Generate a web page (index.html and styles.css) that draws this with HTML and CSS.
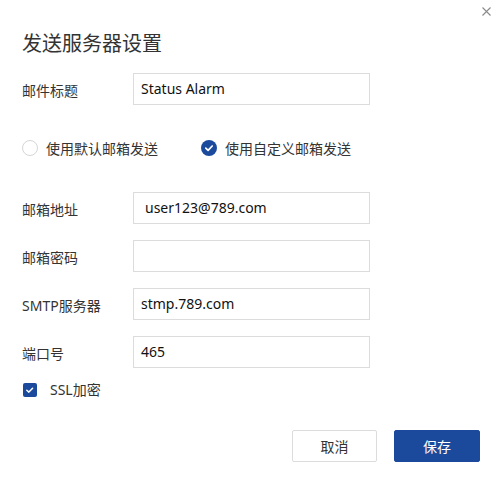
FILE: index.html
```html
<!DOCTYPE html>
<html lang="zh-CN">
<head>
<meta charset="utf-8">
<title>发送服务器设置</title>
<link rel="stylesheet" href="styles.css">
</head>
<body>
<div class="dialog">
  <div class="topbar">
    <svg class="close" width="9" height="9" viewBox="0 0 9 9"><path d="M0.5 0.5 L8.5 8.5 M8.5 0.5 L0.5 8.5" stroke="#8a8a8a" stroke-width="1.1" fill="none"/></svg>
  </div>
  <h1 class="title">发送服务器设置</h1>

  <div class="row first">
    <label class="label">邮件标题</label>
    <div class="input">Status Alarm</div>
  </div>

  <div class="radios">
    <div class="radio">
      <span class="circle"></span>
      <span class="rtext">使用默认邮箱发送</span>
    </div>
    <div class="radio">
      <span class="circle on"><svg width="16" height="16" viewBox="0 0 16 16"><path d="M4.8 8.2 L7.1 10.4 L11.2 6" stroke="#fff" stroke-width="1.7" fill="none" stroke-linecap="round" stroke-linejoin="round"/></svg></span>
      <span class="rtext">使用自定义邮箱发送</span>
    </div>
  </div>

  <div class="row addr">
    <label class="label">邮箱地址</label>
    <div class="input indent">user123@789.com</div>
  </div>
  <div class="row">
    <label class="label">邮箱密码</label>
    <div class="input"></div>
  </div>
  <div class="row">
    <label class="label">SMTP服务器</label>
    <div class="input">stmp.789.com</div>
  </div>
  <div class="row">
    <label class="label">端口号</label>
    <div class="input">465</div>
  </div>

  <div class="check">
    <span class="box"><svg width="14" height="14" viewBox="0 0 14 14"><path d="M3.8 7.2 L5.9 9.1 L9.6 5.2" stroke="#fff" stroke-width="1.5" fill="none" stroke-linecap="round" stroke-linejoin="round"/></svg></span>
    <span class="ctext">SSL加密</span>
  </div>

  <div class="actions">
    <button class="btn cancel">取消</button>
    <button class="btn save">保存</button>
  </div>
</div>
</body>
</html>
```

FILE: styles.css
```css
html, body {
  margin: 0;
  padding: 0;
  background: #fff;
}
body {
  font-family: "Noto Sans", "Noto Sans CJK SC", sans-serif;
  color: #333;
}
.dialog {
  width: 503px;
  height: 486px;
  box-sizing: border-box;
  padding: 0 23px 0 22px;
  display: flex;
  flex-direction: column;
}
.topbar {
  display: flex;
  justify-content: flex-end;
  padding-top: 7px;
  margin-right: -11px;
  height: 9px;
}
.title {
  margin: 13px 0 0 0;
  font-size: 20px;
  line-height: 28px;
  font-weight: 400;
  color: #333;
  font-family: "Noto Sans CJK SC", sans-serif;
}
.row {
  display: flex;
  align-items: center;
  height: 32px;
  margin-top: 16px;
}
.row.first {
  margin-top: 16px;
}
.row.addr {
  margin-top: 34px;
}
.label {
  width: 111px;
  font-size: 14px;
  line-height: 20px;
  padding-top: 4px;
  color: #333;
  font-family: "Noto Sans", "Noto Sans CJK SC", sans-serif;
}
.input {
  width: 237px;
  height: 32px;
  box-sizing: border-box;
  border: 1px solid #dcdcdc;
  padding: 0 7px;
  font-size: 14px;
  line-height: 30px;
  color: #111;
  font-family: "Noto Sans", sans-serif;
}
.input.indent {
  padding-left: 11px;
}
.radios {
  display: flex;
  align-items: center;
  height: 20px;
  margin-top: 33px;
  gap: 43px;
}
.radio {
  display: flex;
  align-items: center;
}
.circle {
  width: 16px;
  height: 16px;
  box-sizing: border-box;
  border-radius: 50%;
  border: 1px solid #d6d6d6;
  display: flex;
}
.circle.on {
  border: none;
  background: #1b4a9d;
}
.rtext {
  margin-left: 8px;
  font-size: 14px;
  line-height: 20px;
  font-family: "Noto Sans CJK SC", sans-serif;
  color: #333;
}
.check {
  display: flex;
  align-items: center;
  height: 20px;
  margin-top: 12px;
  padding-left: 1px;
}
.box {
  width: 14px;
  height: 14px;
  border-radius: 2px;
  background: #1b4a9d;
  display: flex;
}
.ctext {
  margin-left: 13px;
  font-size: 14px;
  line-height: 20px;
  color: #333;
  font-family: "Noto Sans", "Noto Sans CJK SC", sans-serif;
}
.actions {
  display: flex;
  justify-content: flex-end;
  gap: 17px;
  margin-top: 30px;
}
.btn {
  height: 32px;
  box-sizing: border-box;
  border-radius: 2px;
  font-size: 14px;
  font-family: "Noto Sans CJK SC", sans-serif;
  padding: 0;
  cursor: pointer;
}
.cancel {
  width: 85px;
  background: #fff;
  border: 1px solid #dcdcdc;
  color: #333;
}
.save {
  width: 86px;
  background: #1b4a9d;
  border: 1px solid #1b4a9d;
  color: #fff;
}
```
